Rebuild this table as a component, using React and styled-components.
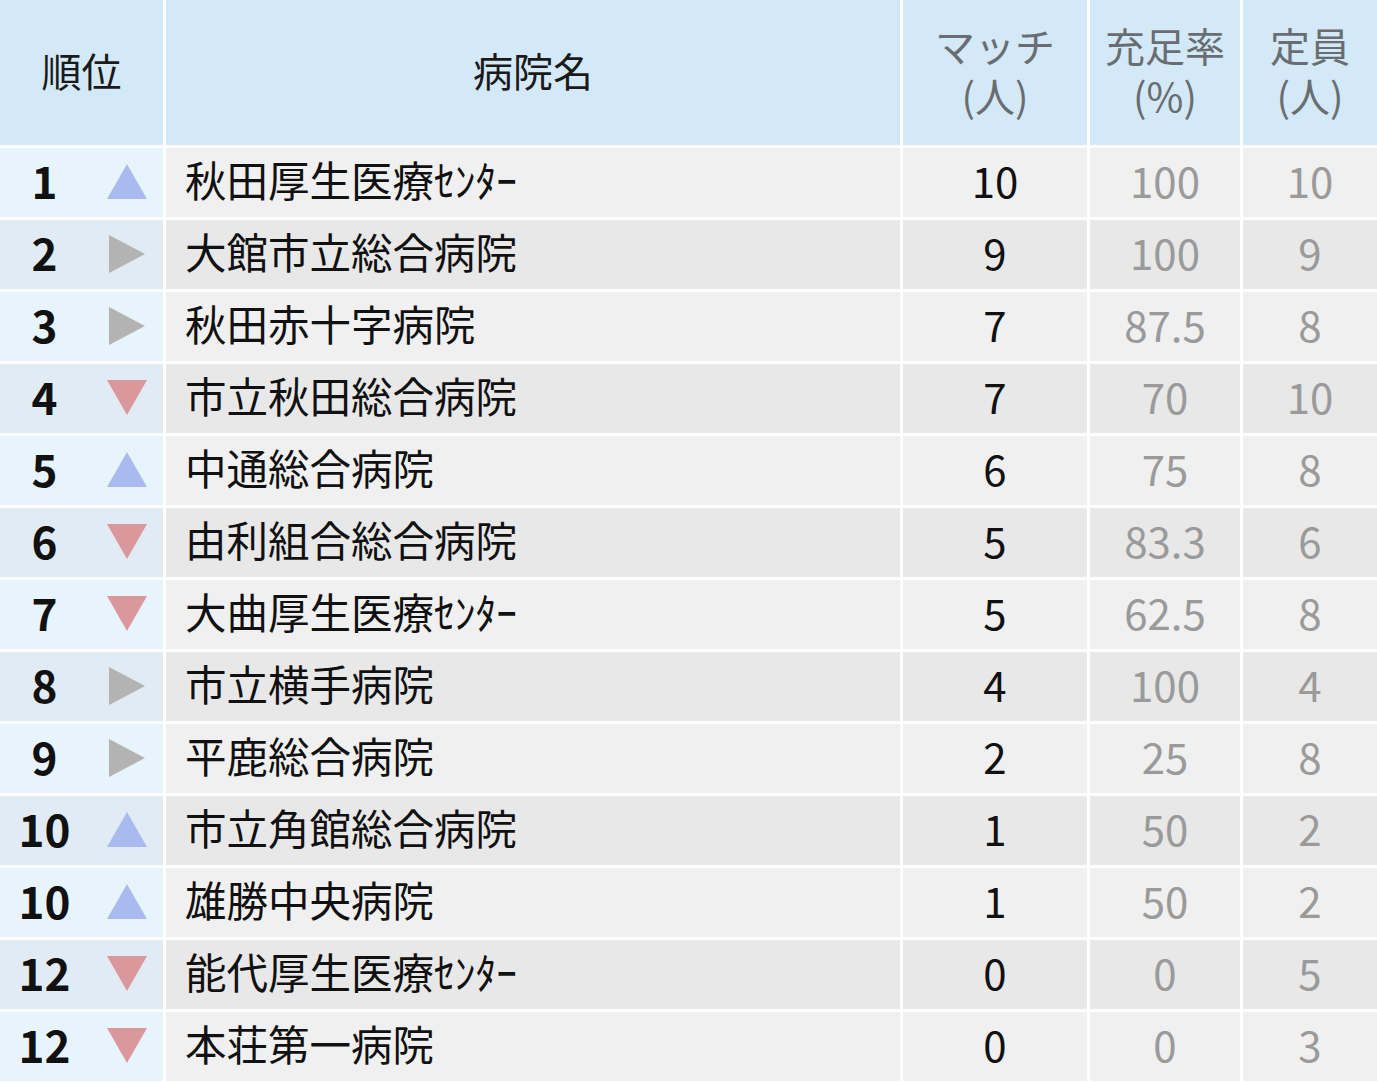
import React from 'react';
import styled, { createGlobalStyle } from 'styled-components';

const GlobalStyle = createGlobalStyle`
  html, body {
    margin: 0;
    padding: 0;
    background: #ffffff;
  }
  body {
    font-family: "Noto Sans CJK JP", "Noto Sans", sans-serif;
  }
`;

const rows = [
  { rank: 1, trend: 'up', name: '秋田厚生医療ｾﾝﾀｰ', match: 10, rate: '100', cap: 10 },
  { rank: 2, trend: 'flat', name: '大館市立総合病院', match: 9, rate: '100', cap: 9 },
  { rank: 3, trend: 'flat', name: '秋田赤十字病院', match: 7, rate: '87.5', cap: 8 },
  { rank: 4, trend: 'down', name: '市立秋田総合病院', match: 7, rate: '70', cap: 10 },
  { rank: 5, trend: 'up', name: '中通総合病院', match: 6, rate: '75', cap: 8 },
  { rank: 6, trend: 'down', name: '由利組合総合病院', match: 5, rate: '83.3', cap: 6 },
  { rank: 7, trend: 'down', name: '大曲厚生医療ｾﾝﾀｰ', match: 5, rate: '62.5', cap: 8 },
  { rank: 8, trend: 'flat', name: '市立横手病院', match: 4, rate: '100', cap: 4 },
  { rank: 9, trend: 'flat', name: '平鹿総合病院', match: 2, rate: '25', cap: 8 },
  { rank: 10, trend: 'up', name: '市立角館総合病院', match: 1, rate: '50', cap: 2 },
  { rank: 10, trend: 'up', name: '雄勝中央病院', match: 1, rate: '50', cap: 2 },
  { rank: 12, trend: 'down', name: '能代厚生医療ｾﾝﾀｰ', match: 0, rate: '0', cap: 5 },
  { rank: 12, trend: 'down', name: '本荘第一病院', match: 0, rate: '0', cap: 3 },
];

const Table = styled.div`
  width: 1377px;
  display: flex;
  flex-direction: column;
`;

const HeaderRow = styled.div`
  display: flex;
  height: 148px;
`;

const Row = styled.div`
  display: flex;
  height: 72px;
`;

const Cell = styled.div`
  box-sizing: border-box;
  width: ${(p) => p.$w}px;
  flex: none;
  display: flex;
  align-items: center;
  justify-content: ${(p) => (p.$left ? 'flex-start' : 'center')};
  padding-left: ${(p) => (p.$left ? '19px' : '0')};
  padding-bottom: 5px;
  border-bottom: 3px solid #ffffff;
  border-right: ${(p) => (p.$noRight ? 'none' : '3px solid #ffffff')};
  font-size: 42px;
  line-height: 1;
  white-space: nowrap;
`;

const HeadCell = styled(Cell)`
  background: #d4e9f7;
  color: ${(p) => (p.$muted ? '#696d71' : '#1a1a1a')};
  font-size: 40px;
  text-align: center;
  line-height: 50px;
  padding-bottom: 6px;
`;

const RankCell = styled(Cell)`
  background: ${(p) => (p.$odd ? '#e8f4fc' : '#e0ebf3')};
  font-size: 44px;
  font-weight: 700;
  color: #111111;
  padding-left: 1px;
`;

const ArrowCell = styled(Cell)`
  background: ${(p) => (p.$odd ? '#e8f4fc' : '#e0ebf3')};
  padding-left: 3px;
  padding-bottom: 2px;
`;

const BodyCell = styled(Cell)`
  background: ${(p) => (p.$odd ? '#f0f0f0' : '#e8e8e8')};
  color: ${(p) => (p.$grey ? '#9a9a9a' : '#111111')};
  font-size: ${(p) => (p.$name ? '41.5px' : '42px')};
`;

const Trend = ({ dir }) => {
  if (dir === 'up') {
    return (
      <svg width="40" height="35" viewBox="0 0 40 35">
        <polygon points="20,0 40,35 0,35" fill="#a9bbee" />
      </svg>
    );
  }
  if (dir === 'down') {
    return (
      <svg width="40" height="35" viewBox="0 0 40 35">
        <polygon points="0,0 40,0 20,35" fill="#d9989b" />
      </svg>
    );
  }
  return (
    <svg width="36" height="38" viewBox="0 0 36 38">
      <polygon points="0,0 36,19 0,38" fill="#b3b3b3" />
    </svg>
  );
};

const App = () => {
  return (
    <>
      <GlobalStyle />
      <Table>
        <HeaderRow>
          <HeadCell $w={166}>順位</HeadCell>
          <HeadCell $w={737}>病院名</HeadCell>
          <HeadCell $w={187} $muted>
            マッチ
            <br />
            (人)
          </HeadCell>
          <HeadCell $w={153} $muted>
            充足率
            <br />
            (%)
          </HeadCell>
          <HeadCell $w={134} $muted $noRight>
            定員
            <br />
            (人)
          </HeadCell>
        </HeaderRow>
        {rows.map((r, i) => {
          const odd = i % 2 === 0;
          return (
            <Row key={i}>
              <RankCell $w={88} $odd={odd} $noRight>
                {r.rank}
              </RankCell>
              <ArrowCell $w={78} $odd={odd}>
                <Trend dir={r.trend} />
              </ArrowCell>
              <BodyCell $w={737} $odd={odd} $left $name>
                {r.name}
              </BodyCell>
              <BodyCell $w={187} $odd={odd}>
                {r.match}
              </BodyCell>
              <BodyCell $w={153} $odd={odd} $grey>
                {r.rate}
              </BodyCell>
              <BodyCell $w={134} $odd={odd} $grey $noRight>
                {r.cap}
              </BodyCell>
            </Row>
          );
        })}
      </Table>
    </>
  );
};

export default App;
